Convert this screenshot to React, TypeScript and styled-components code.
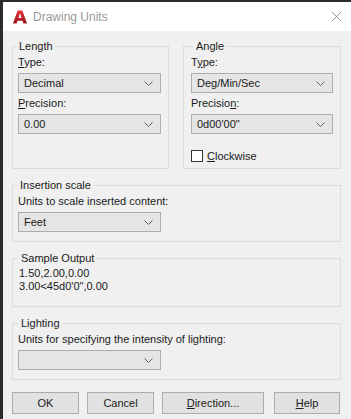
import styled, { createGlobalStyle } from 'styled-components'

const Global = createGlobalStyle`
  html, body {
    margin: 0;
    padding: 0;
    background: #f0f0f0;
  }
  * {
    box-sizing: border-box;
  }
`

export default function App() {
  return (
    <>
      <Global />
      <Window>
        <TitleBar>
          <Logo viewBox='0 0 16 16'>
            <defs>
              <linearGradient id='ag' x1='0' y1='0' x2='0' y2='1'>
                <stop offset='0' stopColor='#e8363b' />
                <stop offset='1' stopColor='#9c1218' />
              </linearGradient>
            </defs>
            <path d='M5.6 1.5h4.8l4.6 13h-3.6l-0.9-2.8h-5l-0.9 2.8h-3.6z M6.4 9h3.2l-1.6-4.8z' fill='url(#ag)' fillRule='evenodd' />
          </Logo>
          <Title>Drawing Units</Title>
          <Close viewBox='0 0 12 12'>
            <path d='M1 1L11 11M11 1L1 11' stroke='#8a8a8a' strokeWidth='1' />
          </Close>
        </TitleBar>

        <Body>
          <TopRow>
            <Group $pad={5}>
              <Legend $lx={-2}>Length</Legend>
              <Label><u>T</u>ype:</Label>
              <Select value='Decimal' />
              <Label $top={2}><u>P</u>recision:</Label>
              <Select value='0.00' />
            </Group>

            <Group $pad={7}>
              <Legend $lx={2}>Angle</Legend>
              <Label>T<u>y</u>pe:</Label>
              <Select value='Deg/Min/Sec' $w={142} />
              <Label $top={2}>Precisio<u>n</u>:</Label>
              <Select value={'0d00\'00"'} $w={142} />
              <Check>
                <Box />
                <span><u>C</u>lockwise</span>
              </Check>
            </Group>
          </TopRow>

          <Group $pad={5} $h={65}>
            <Legend $lx={-1}>Insertion scale</Legend>
            <Label>Units to scale inserted content:</Label>
            <Select value='Feet' />
          </Group>

          <Group $pad={6} $h={57}>
            <Legend $lx={-1}>Sample Output</Legend>
            <Sample>
              <div>1.50,2.00,0.00</div>
              <div>{'3.00<45d0\'0",0.00'}</div>
            </Sample>
          </Group>

          <Group $pad={5} $h={65}>
            <Legend $lx={0}>Lighting</Legend>
            <Label>Units for specifying the intensity of lighting:</Label>
            <Select value='' />
          </Group>

          <Buttons>
            <Button $w={67}>OK</Button>
            <Button $w={67}>Cancel</Button>
            <Button $w={102}><u>D</u>irection...</Button>
            <Button $w={66} $ml={2}><u>H</u>elp</Button>
          </Buttons>
        </Body>
      </Window>
    </>
  )
}

function Select({ value, $w }: { value: string; $w?: number }) {
  return (
    <Combo $w={$w}>
      <span>{value}</span>
      <Chevron viewBox='0 0 9 5'>
        <path d='M0.5 0.5L4.5 4.5L8.5 0.5' fill='none' stroke='#606060' strokeWidth='1' />
      </Chevron>
    </Combo>
  )
}

const Window = styled.div`
  width: 351px;
  height: 419px;
  border-top: 2px solid #2b2b2b;
  border-left: 3px solid #2b2b2b;
  background: #f0f0f0;
  font-family: 'Liberation Sans', Arial, sans-serif;
  font-size: 11px;
  color: #1a1a1a;
  display: flex;
  flex-direction: column;
  overflow: hidden;
`

const TitleBar = styled.div`
  height: 29px;
  background: #fff;
  display: flex;
  align-items: center;
  padding-left: 9px;
  padding-right: 9px;
`

const Logo = styled.svg`
  width: 16px;
  height: 16px;
  margin-right: 5px;
`

const Title = styled.div`
  flex: 1;
  color: #9a9a9a;
  font-size: 12px;
`

const Close = styled.svg`
  width: 11px;
  height: 11px;
`

const Body = styled.div`
  flex: 1;
  padding: 7px 10px 0 9px;
  display: flex;
  flex-direction: column;
  gap: 8px;
`

const TopRow = styled.div`
  display: grid;
  grid-template-columns: 157px 158px;
  column-gap: 14px;
  height: 131px;
`

const Group = styled.fieldset<{ $pad: number; $h?: number }>`
  margin: 0;
  padding: 0 ${p => p.$pad}px;
  border: 1px solid #dcdcdc;
  min-width: 0;
  ${p => (p.$h ? `height: ${p.$h}px;` : '')}
  display: flex;
  flex-direction: column;
  align-items: flex-start;
`

const Legend = styled.legend<{ $lx: number }>`
  margin-left: ${p => p.$lx}px;
  padding: 0 2px 0 3px;
  line-height: 16px;
  font-size: 11px;
`

const Label = styled.div<{ $top?: number }>`
  line-height: 16px;
  margin-top: ${p => p.$top ?? 0}px;
  margin-bottom: 3px;
  white-space: nowrap;

  u {
    text-underline-offset: 1px;
  }
`

const Combo = styled.div<{ $w?: number }>`
  width: ${p => p.$w ?? 143}px;
  height: 20px;
  background: #e5e5e5;
  border: 1px solid #adadad;
  display: flex;
  align-items: center;
  justify-content: space-between;
  padding: 0 7px 0 5px;
  line-height: 16px;
  flex-shrink: 0;
`

const Chevron = styled.svg`
  width: 9px;
  height: 5px;
`

const Check = styled.div`
  display: flex;
  align-items: center;
  gap: 4px;
  margin-top: 14px;
  line-height: 16px;
`

const Box = styled.span`
  width: 12px;
  height: 12px;
  background: #fff;
  border: 1px solid #333;
`

const Sample = styled.div`
  line-height: 13px;
  margin-top: 1px;
  white-space: nowrap;
`

const Buttons = styled.div`
  display: flex;
  margin-top: 4px;
  gap: 8px;
`

const Button = styled.div<{ $w: number; $ml?: number }>`
  width: ${p => p.$w}px;
  height: 22px;
  margin-left: ${p => p.$ml ?? 0}px;
  background: #e1e1e1;
  border: 1px solid #adadad;
  display: flex;
  align-items: center;
  justify-content: center;
  line-height: 16px;
`
